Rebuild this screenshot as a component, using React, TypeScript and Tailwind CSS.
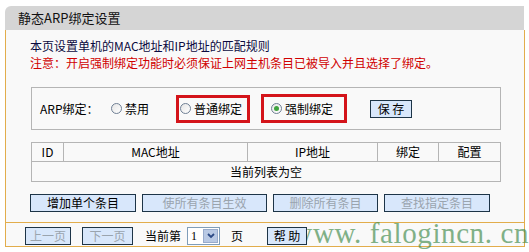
import React from 'react';

const cjk = { fontFamily: '"Noto Sans CJK SC", "Liberation Sans", sans-serif' };

const Radio: React.FC<{ checked?: boolean }> = ({ checked }) => (
    <span className="inline-flex w-[11px] h-[11px] rounded-full border border-[#6f7f94] bg-gradient-to-br from-[#e6e6e6] to-white items-center justify-center mr-[3px]">
        {checked && <span className="w-[5px] h-[5px] rounded-full bg-[#3fa33f]"></span>}
    </span>
);

const Btn: React.FC<{ label: string; w: string; disabled?: boolean }> = ({ label, w, disabled }) => (
    <div
        className={`${w} h-[18px] border border-[#1d3447] bg-[#d8e7fb] flex items-center justify-center text-[12px] leading-none ${disabled ? 'text-[#9aa4ae]' : 'text-black'}`}
    >
        {label}
    </div>
);

const App: React.FC = () => {
    return (
        <div className="w-[529px] h-[252px] bg-white relative overflow-hidden pt-[6px] pl-[5px]" style={cjk}>
            <div className="w-[520px]">
                {/* title */}
                <div className="h-[24px] w-[519px] bg-[#d5d5d5] rounded-tl-[6px] flex items-center pl-[13px] text-[13px] text-[#111]">
                    静态ARP绑定设置
                </div>

                {/* body */}
                <div className="border-x border-b border-[#e2ad4c] bg-[#f9f9f9] h-[217px]">
                    <div className="pl-[25px] pt-[7px]">
                        <div className="text-[12px] leading-[17px] text-[#0a0a40] -ml-[1px]">本页设置单机的MAC地址和IP地址的匹配规则</div>
                        <div className="text-[12px] leading-[17px] text-[#d00000] -ml-[1px]">注意：开启强制绑定功能时必须保证上网主机条目已被导入并且选择了绑定。</div>

                        {/* ARP options */}
                        <div className="mt-[16px] w-[470px] h-[43px] border border-[#b5b5b5] flex items-center text-[12px] text-black">
                            <span className="ml-[8px] w-[71px]">ARP绑定：</span>
                            <span className="flex items-center">
                                <Radio />禁用
                            </span>
                            <span className="ml-[27px] h-[28px] w-[74px] border-[3px] border-[#d4141a] flex items-center pl-[1px]">
                                <Radio />普通绑定
                            </span>
                            <span className="ml-[11px] h-[29px] w-[86px] border-[3px] border-[#d4141a] flex items-center pl-[7px]">
                                <Radio checked />强制绑定
                            </span>
                            <div className="ml-[23px]">
                                <Btn label="保 存" w="w-[42px]" />
                            </div>
                        </div>

                        {/* table */}
                        <table className="mt-[12px] w-[470px] border-collapse text-[12px] text-black">
                            <tbody>
                                <tr className="h-[19px]">
                                    <td className="w-[32px] border border-[#b5b5b5] text-center">ID</td>
                                    <td className="w-[184px] border border-[#b5b5b5] text-center">MAC地址</td>
                                    <td className="w-[130px] border border-[#b5b5b5] text-center">IP地址</td>
                                    <td className="w-[61px] border border-[#b5b5b5] text-center">绑定</td>
                                    <td className="border border-[#b5b5b5] text-center">配置</td>
                                </tr>
                                <tr className="h-[20px]">
                                    <td colSpan={5} className="border border-[#b5b5b5] text-center">当前列表为空</td>
                                </tr>
                            </tbody>
                        </table>

                        {/* actions */}
                        <div className="mt-[12px] flex gap-[6px] -ml-[1px]">
                            <Btn label="增加单个条目" w="w-[106px]" />
                            <Btn label="使所有条目生效" w="w-[125px]" disabled />
                            <Btn label="删除所有条目" w="w-[105px]" disabled />
                            <Btn label="查找指定条目" w="w-[106px]" disabled />
                        </div>
                    </div>

                    {/* footer */}
                    <div className="mt-[10px] border-t border-[#e2ad4c] pt-[4px] pl-[19px] flex items-center text-[12px] text-black">
                        <Btn label="上一页" w="w-[46px]" disabled />
                        <div className="ml-[11px]">
                            <Btn label="下一页" w="w-[51px]" disabled />
                        </div>
                        <span className="ml-[12px]">当前第</span>
                        <div className="ml-[6px] w-[33px] h-[18px] border border-[#7f9db9] bg-white flex items-center">
                            <span className="pl-[3px] flex-1 text-[12px]" style={{ fontFamily: '"Liberation Serif", serif' }}>1</span>
                            <span className="w-[15px] h-[14px] mr-[1px] bg-[#b9c9e4] border border-[#98abcc] flex items-center justify-center">
                                <svg width="8" height="6" viewBox="0 0 8 6">
                                    <path d="M1 1 L4 4 L7 1" fill="none" stroke="#2c4a86" strokeWidth="1.8" />
                                </svg>
                            </span>
                        </div>
                        <span className="ml-[11px]">页</span>
                        <div className="ml-[24px] relative z-10">
                            <Btn label="帮 助" w="w-[40px]" />
                        </div>
                    </div>
                </div>
            </div>

            {/* watermark */}
            <div
                className="absolute right-[0px] bottom-[4px] text-[29px] leading-none text-[#3f8a4a] opacity-65 tracking-[0.6px] whitespace-nowrap"
                style={{ fontFamily: '"Liberation Serif", serif' }}
            >
                www. falogincn. cn
            </div>
        </div>
    );
};

export default App;
